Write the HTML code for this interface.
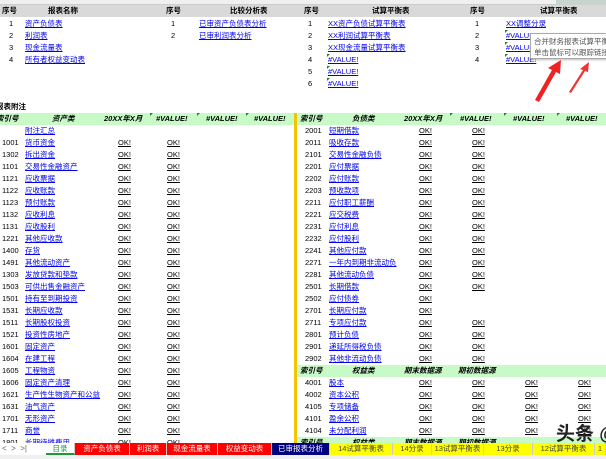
<!DOCTYPE html>
<html><head><meta charset="utf-8"><style>
*{margin:0;padding:0;box-sizing:border-box}
body{width:606px;height:459px;overflow:hidden;background:#fff;position:relative;font-family:"Liberation Sans","Noto Sans CJK SC",sans-serif;font-size:7.5px;color:#000}
.a{position:absolute;white-space:nowrap;line-height:12px;height:12px}
.l{color:#0000ee;text-decoration:underline}
.k{text-decoration:underline}
.h{font-weight:bold}
.hi{font-weight:bold;font-style:italic}
.tab{position:absolute;top:443px;height:12px;line-height:12px;text-align:center;font-size:7.5px;color:#fff;border-right:1px solid #ccc;white-space:nowrap;overflow:hidden}
.y{background:#ffff00;color:#444}
.r{background:#ff0000}
.g{position:absolute;border-left:3px solid #1a8a1a;border-bottom:3px solid transparent;width:0;height:0}
</style></head><body>
<div style="position:absolute;left:0;top:0;width:606px;height:5px;background:#f0f0f0;border-bottom:1px solid #ccc"></div>
<div style="position:absolute;left:556px;top:0;width:50px;height:5px;background:#c8d4cc"></div>
<div style="position:absolute;left:0;top:5px;width:606px;height:12px;background:#d9d9d9"></div>
<div class="a h" style="left:2px;top:5px">序号</div>
<div class="a h" style="left:48px;top:5px">报表名称</div>
<div class="a h" style="left:166px;top:5px">序号</div>
<div class="a h" style="left:230px;top:5px">比较分析表</div>
<div class="a h" style="left:304px;top:5px">序号</div>
<div class="a h" style="left:372px;top:5px">试算平衡表</div>
<div class="a h" style="left:470px;top:5px">序号</div>
<div class="a h" style="left:540px;top:5px">试算平衡表</div>

<div class="a" style="left:9px;top:18px">1</div><div class="a l" style="left:25px;top:18px">资产负债表</div>
<div class="a" style="left:9px;top:30px">2</div><div class="a l" style="left:25px;top:30px">利润表</div>
<div class="a" style="left:9px;top:42px">3</div><div class="a l" style="left:25px;top:42px">现金流量表</div>
<div class="a" style="left:9px;top:54px">4</div><div class="a l" style="left:25px;top:54px">所有者权益变动表</div>
<div class="a" style="left:171px;top:18px">1</div><div class="a l" style="left:199px;top:18px">已审资产负债表分析</div>
<div class="a" style="left:171px;top:30px">2</div><div class="a l" style="left:199px;top:30px">已审利润表分析</div>

<div class="a" style="left:308px;top:18px">1</div><div class="a l" style="left:328px;top:18px">XX资产负债试算平衡表</div>
<div class="a" style="left:308px;top:30px">2</div><div class="a l" style="left:328px;top:30px">XX利润试算平衡表</div>
<div class="a" style="left:308px;top:42px">3</div><div class="a l" style="left:328px;top:42px">XX现金流量试算平衡表</div>
<div class="a" style="left:308px;top:54px">4</div><div class="a l" style="left:328px;top:54px">#VALUE!</div>
<div class="a" style="left:308px;top:66px">5</div><div class="a l" style="left:328px;top:66px">#VALUE!</div>
<div class="a" style="left:308px;top:78px">6</div><div class="a l" style="left:328px;top:78px">#VALUE!</div>
<div class="g" style="left:327px;top:54px"></div><div class="g" style="left:327px;top:66px"></div><div class="g" style="left:327px;top:78px"></div>
<div class="a" style="left:475px;top:18px">1</div><div class="a l" style="left:506px;top:18px">XX调整分录</div>
<div class="a" style="left:475px;top:30px">2</div><div class="a l" style="left:506px;top:30px">#VALUE!</div>
<div class="a" style="left:475px;top:42px">3</div><div class="a l" style="left:506px;top:42px">#VALUE!</div>
<div class="a" style="left:475px;top:54px">4</div><div class="a l" style="left:506px;top:54px">#VALUE!</div>
<div class="g" style="left:505px;top:30px"></div><div class="g" style="left:505px;top:42px"></div><div class="g" style="left:505px;top:54px"></div>

<div style="position:absolute;left:530px;top:33px;width:80px;height:26px;background:#fff;border:1px solid #aaa;box-shadow:1px 1px 2px #bbb;font-size:7.5px;color:#555;line-height:11px;padding:2px 0 0 3px;white-space:nowrap;overflow:hidden">合并财务报表试算平衡表<br>单击鼠标可以跟踪链接</div>
<svg style="position:absolute;left:0;top:0" width="606" height="459">
<polygon points="535,100 552,70 548,68 561,60 560,74 556,72 539,102" fill="#ee2222"/>
<polygon points="569,92 583,70 580,69 589,62 588,72 585,71 571,93" fill="#ee3333"/>
</svg>

<div class="a h" style="left:-4px;top:101px">报表附注</div>
<div style="position:absolute;left:0;top:113px;width:606px;height:12px;background:#c8fac8"></div>
<div style="position:absolute;left:294px;top:113px;width:3px;height:330px;background:#f5c400"></div>
<div class="a hi" style="left:-4px;top:113px">索引号</div>
<div class="a hi" style="left:52px;top:113px">资产类</div>
<div class="a hi" style="left:104px;top:113px">20XX年X月</div>
<div class="a hi" style="left:156px;top:113px">#VALUE!</div>
<div class="a hi" style="left:206px;top:113px">#VALUE!</div>
<div class="a hi" style="left:254px;top:113px">#VALUE!</div>
<div class="a hi" style="left:300px;top:113px">索引号</div>
<div class="a hi" style="left:352px;top:113px">负债类</div>
<div class="a hi" style="left:404px;top:113px">20XX年X月</div>
<div class="a hi" style="left:460px;top:113px">#VALUE!</div>
<div class="a hi" style="left:513px;top:113px">#VALUE!</div>
<div class="a hi" style="left:566px;top:113px">#VALUE!</div>

<div id="L"></div>
<script>
var L=[["","附注汇总",0],["1001","货币资金"],["1302","拆出资金"],["1101","交易性金融资产"],["1121","应收票据"],["1122","应收账款"],["1123","预付账款"],["1132","应收利息"],["1131","应收股利"],["1221","其他应收款"],["1400","存货"],["1491","其他流动资产"],["1303","发放贷款和垫款"],["1503","可供出售金融资产"],["1501","持有至到期投资"],["1531","长期应收款"],["1511","长期股权投资"],["1521","投资性房地产"],["1601","固定资产"],["1604","在建工程"],["1605","工程物资"],["1606","固定资产清理"],["1621","生产性生物资产和公益"],["1631","油气资产"],["1701","无形资产"],["1711","商誉"],["1801","长期待摊费用"]];
var R=[["2001","短期借款",2],["2011","吸收存款",2],["2101","交易性金融负债",2],["2201","应付票据",2],["2202","应付账款",2],["2203","预收款项",2],["2211","应付职工薪酬",2],["2221","应交税费",2],["2231","应付利息",2],["2232","应付股利",2],["2241","其他应付款",2],["2271","一年内到期非流动负",2],["2281","其他流动负债",2],["2501","长期借款",2],["2502","应付债券",1],["2701","长期应付款",1],["2711","专项应付款",2],["2801","预计负债",2],["2901","递延所得税负债",2],["2902","其他非流动负债",2],null,["4001","股本",4],["4002","资本公积",4],["4105","专项储备",4],["4101","盈余公积",4],["4104","未分配利润",4],null];
var h="";
L.forEach(function(r,i){var t=125+i*12;h+='<div class="a" style="left:2px;top:'+t+'px">'+r[0]+'</div><div class="a l" style="left:25px;top:'+t+'px">'+r[1]+'</div>';if(r[2]!==0){h+='<div class="a k" style="left:118px;top:'+t+'px">OK!</div><div class="a k" style="left:167px;top:'+t+'px">OK!</div>';}});
var ox=[419,472,525,578];
R.forEach(function(r,i){var t=125+i*12;if(!r){h+='<div style="position:absolute;left:297px;top:'+t+'px;width:309px;height:12px;background:#c8fac8"></div><div class="a hi" style="left:300px;top:'+t+'px">索引号</div><div class="a hi" style="left:352px;top:'+t+'px">权益类</div><div class="a hi" style="left:404px;top:'+t+'px">期末数据源</div><div class="a hi" style="left:458px;top:'+t+'px">期初数据源</div>';return;}h+='<div class="a" style="left:305px;top:'+t+'px">'+r[0]+'</div><div class="a l" style="left:329px;top:'+t+'px">'+r[1]+'</div>';for(var j=0;j<r[2];j++)h+='<div class="a k" style="left:'+ox[j]+'px;top:'+t+'px">OK!</div>';});
document.getElementById("L").innerHTML=h;
</script>
<div class="g" style="left:150px;top:113px"></div><div class="g" style="left:197px;top:113px"></div><div class="g" style="left:246px;top:113px"></div>
<div class="g" style="left:450px;top:113px"></div><div class="g" style="left:504px;top:113px"></div><div class="g" style="left:557px;top:113px"></div>

<div style="position:absolute;left:556px;top:424px;font-size:19px;font-weight:bold;color:#222;line-height:22px;white-space:nowrap">头条 @</div>

<div style="position:absolute;left:0;top:443px;width:606px;height:12px;background:#fff"></div>
<div style="position:absolute;left:0;top:455px;width:606px;height:4px;background:#f0f0f0"></div>
<div class="a" style="left:2px;top:443px;color:#666;font-size:8px">&lt; &nbsp;&gt; &nbsp;&gt;|</div>
<div class="tab" style="left:46px;width:29px;color:#1a9a3a;background:#fff;border-bottom:2px solid #1a9a3a">目录</div>
<div class="tab r" style="left:75px;width:55px">资产负债表</div>
<div class="tab r" style="left:130px;width:37px">利润表</div>
<div class="tab r" style="left:167px;width:51px">现金流量表</div>
<div class="tab r" style="left:218px;width:54px">权益变动表</div>
<div class="tab" style="left:272px;width:58px;background:#000080">已审报表分析</div>
<div class="tab y" style="left:330px;width:63px">14试算平衡表</div>
<div class="tab y" style="left:393px;width:39px">14分录</div>
<div class="tab y" style="left:432px;width:52px">13试算平衡表</div>
<div class="tab y" style="left:484px;width:49px">13分录</div>
<div class="tab y" style="left:533px;width:62px">12试算平衡表</div>
<div class="tab y" style="left:595px;width:11px">1</div>
</body></html>
